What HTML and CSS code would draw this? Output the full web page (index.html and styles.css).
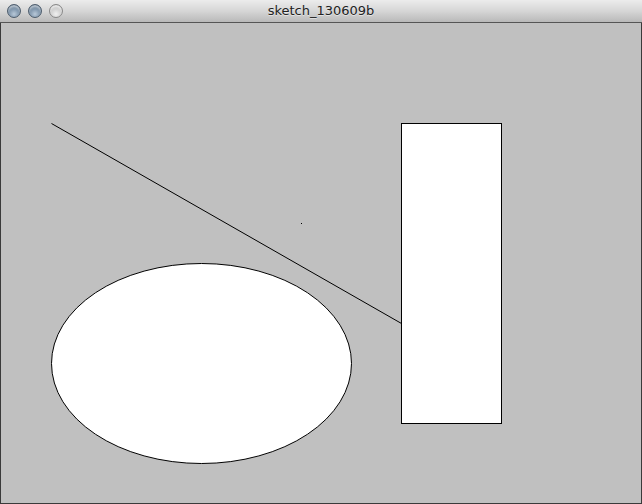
FILE: index.html
```html
<!DOCTYPE html>
<html>
<head>
<meta charset="utf-8">
<link rel="stylesheet" href="styles.css">
</head>
<body>
<div class="window">
  <div class="titlebar">
    <div class="lights">
      <span class="light blue"></span>
      <span class="light blue"></span>
      <span class="light grey"></span>
    </div>
    <div class="title">sketch_130609b</div>
  </div>
  <div class="canvas">
    <svg width="640" height="480" viewBox="0 0 640 480" class="sketch">
      <line x1="50.5" y1="100.5" x2="400.5" y2="300.5" stroke="#000" stroke-width="1"/>
      <rect x="300" y="200" width="1" height="1" fill="#000"/>
      <ellipse cx="200.5" cy="340.5" rx="150" ry="100" fill="#fff" stroke="#000" stroke-width="1"/>
      <rect x="400.5" y="100.5" width="100" height="300" fill="#fff" stroke="#000" stroke-width="1"/>
    </svg>
  </div>
</div>
</body>
</html>
```
FILE: styles.css
```css
html, body {
  margin: 0;
  padding: 0;
  background: #c0c0c0;
}
.window {
  width: 642px;
  height: 504px;
  display: flex;
  flex-direction: column;
}
.titlebar {
  height: 22px;
  border-bottom: 1px solid #555;
  background: linear-gradient(#ececec, #d6d6d6 50%, #b9b9b9);
  position: relative;
  display: flex;
  align-items: center;
}
.lights {
  display: flex;
  gap: 7px;
  padding-left: 7px;
}
.light {
  width: 14px;
  height: 14px;
  border-radius: 50%;
  box-sizing: border-box;
}
.light.blue {
  background: radial-gradient(circle at 50% 75%, #b8c8d8 0%, #8298ae 45%, #566d84 90%);
  border: 1px solid #4d5c6c;
  box-shadow: inset 0 2px 2px rgba(255,255,255,0.55);
}
.light.grey {
  background: radial-gradient(circle at 50% 75%, #f0f0f0 0%, #cfcfcf 50%, #adadad 90%);
  border: 1px solid #888;
  box-shadow: inset 0 2px 2px rgba(255,255,255,0.7);
}
.title {
  position: absolute;
  left: 0;
  right: 0;
  top: 3px;
  text-align: center;
  font-family: "DejaVu Sans", sans-serif;
  font-size: 13px;
  color: #222;
  text-shadow: 0 1px 0 rgba(255,255,255,0.5);
}
.canvas {
  width: 640px;
  height: 480px;
  border: 1px solid #3a3a3a;
  border-top: none;
  background: #c0c0c0;
}
.sketch {
  display: block;
}
```
